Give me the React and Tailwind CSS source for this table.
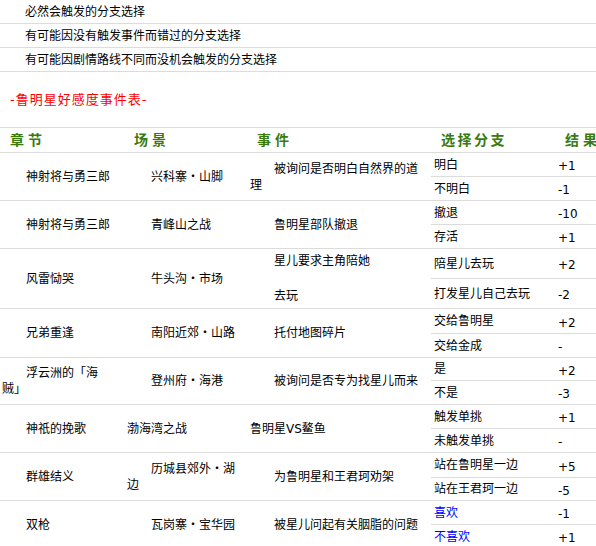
import React from 'react';

const notes = [
  '必然会触发的分支选择',
  '有可能因没有触发事件而错过的分支选择',
  '有可能因剧情路线不同而没机会触发的分支选择',
];

// sub heights: [first sub-row incl. its border, second sub-row]
const rows = [
  {
    h: [24, 23],
    c1: { lines: ['神射将与勇三郎'], indent: true },
    c2: { lines: ['兴科寨・山脚'], indent: true },
    c3: { lines: ['被询问是否明白自然界的道', '理'], indent: true },
    ch: [['明白', '+1'], ['不明白', '-1']],
  },
  {
    h: [24, 23],
    c1: { lines: ['神射将与勇三郎'], indent: true },
    c2: { lines: ['青峰山之战'], indent: true },
    c3: { lines: ['鲁明星部队撤退'], indent: true },
    ch: [['撤退', '-10'], ['存活', '+1']],
  },
  {
    h: [30, 29],
    c1: { lines: ['风雷恸哭'], indent: true },
    c2: { lines: ['牛头沟・市场'], indent: true },
    c3: { paras: ['星儿要求主角陪她', '去玩'] },
    ch: [['陪星儿去玩', '+2'], ['打发星儿自己去玩', '-2']],
  },
  {
    h: [25, 23],
    c1: { lines: ['兄弟重逢'], indent: true },
    c2: { lines: ['南阳近郊・山路'], indent: true },
    c3: { lines: ['托付地图碎片'], indent: true },
    ch: [['交给鲁明星', '+2'], ['交给金成', '-']],
  },
  {
    h: [23, 23],
    c1: { lines: ['浮云洲的「海', '贼」'], indent: true },
    c2: { lines: ['登州府・海港'], indent: true },
    c3: { lines: ['被询问是否专为找星儿而来'], indent: true },
    ch: [['是', '+2'], ['不是', '-3']],
  },
  {
    h: [24, 23],
    c1: { lines: ['神祇的挽歌'], indent: true },
    c2: { lines: ['渤海湾之战'], indent: false },
    c3: { lines: ['鲁明星VS鳌鱼'], indent: false },
    ch: [['触发单挑', '+1'], ['未触发单挑', '-']],
  },
  {
    h: [25, 22],
    c1: { lines: ['群雄结义'], indent: true },
    c2: { lines: ['历城县郊外・湖', '边'], indent: true },
    c3: { lines: ['为鲁明星和王君珂劝架'], indent: true },
    ch: [['站在鲁明星一边', '+5'], ['站在王君珂一边', '-5']],
  },
  {
    h: [24, 23],
    c1: { lines: ['双枪'], indent: true },
    c2: { lines: ['瓦岗寨・宝华园'], indent: true },
    c3: { lines: ['被星儿问起有关胭脂的问题'], indent: true },
    ch: [['喜欢', '-1'], ['不喜欢', '+1']],
    blue: true,
  },
];

const Cell = ({ c }) => {
  if (c.paras) {
    return (
      <div className="flex flex-col justify-center gap-[19px] pl-[2px] leading-[16px]">
        {c.paras.map((p) => (
          <div key={p} className="indent-6 whitespace-nowrap">{p}</div>
        ))}
      </div>
    );
  }
  return (
    <div className="flex items-center pl-[2px] leading-[16px]">
      <div className={c.indent ? 'indent-6 whitespace-nowrap' : 'whitespace-nowrap'}>
        {c.lines.map((l, i) => (
          <React.Fragment key={i}>
            {i > 0 && <br />}
            {l}
          </React.Fragment>
        ))}
      </div>
    </div>
  );
};

const App = () => {
  return (
    <div
      className="w-[596px] h-[546px] overflow-hidden bg-white text-[12px] text-black"
      style={{ fontFamily: '"DejaVu Sans", "Noto Sans CJK SC", sans-serif' }}
    >
      {notes.map((n) => (
        <div key={n} className="h-[24px] border-b border-[#dcdcdc] flex items-center pl-[25px]">
          {n}
        </div>
      ))}

      <div className="h-[55px] flex items-center pl-[10px] text-[13px] tracking-[1px] text-[#ff0000]">
        -鲁明星好感度事件表-
      </div>

      <div className="h-[26px] border-y border-[#dcdcdc] grid grid-cols-[125px_123px_183px_124px_1fr] items-center font-bold text-[14px] text-[#3a7a0e] whitespace-nowrap">
        <div className="pl-[10px] tracking-[4px]">章节</div>
        <div className="pl-[9px] tracking-[4px]">场景</div>
        <div className="pl-[9px] tracking-[4px]">事件</div>
        <div className="pl-[10px] tracking-[2.5px]">选择分支</div>
        <div className="pl-[10px] tracking-[4px]">结果</div>
      </div>

      {rows.map((r, i) => (
        <div key={i} className="grid grid-cols-[125px_123px_183px_1fr] border-b border-[#dcdcdc]">
          <Cell c={r.c1} />
          <Cell c={r.c2} />
          <Cell c={r.c3} />
          <div className="flex flex-col">
            {r.ch.map(([t, v], j) => (
              <div
                key={j}
                style={{ height: r.h[j] }}
                className={
                  'grid grid-cols-[124px_1fr] items-center whitespace-nowrap ' +
                  (j === 0 ? 'border-b border-[#dcdcdc]' : '')
                }
              >
                <div className={'pl-[3px] ' + (r.blue ? 'text-[#0000ff]' : '')}>{t}</div>
                <div className="pl-[3px] pt-[3px]">{v}</div>
              </div>
            ))}
          </div>
        </div>
      ))}
    </div>
  );
};

export default App;
